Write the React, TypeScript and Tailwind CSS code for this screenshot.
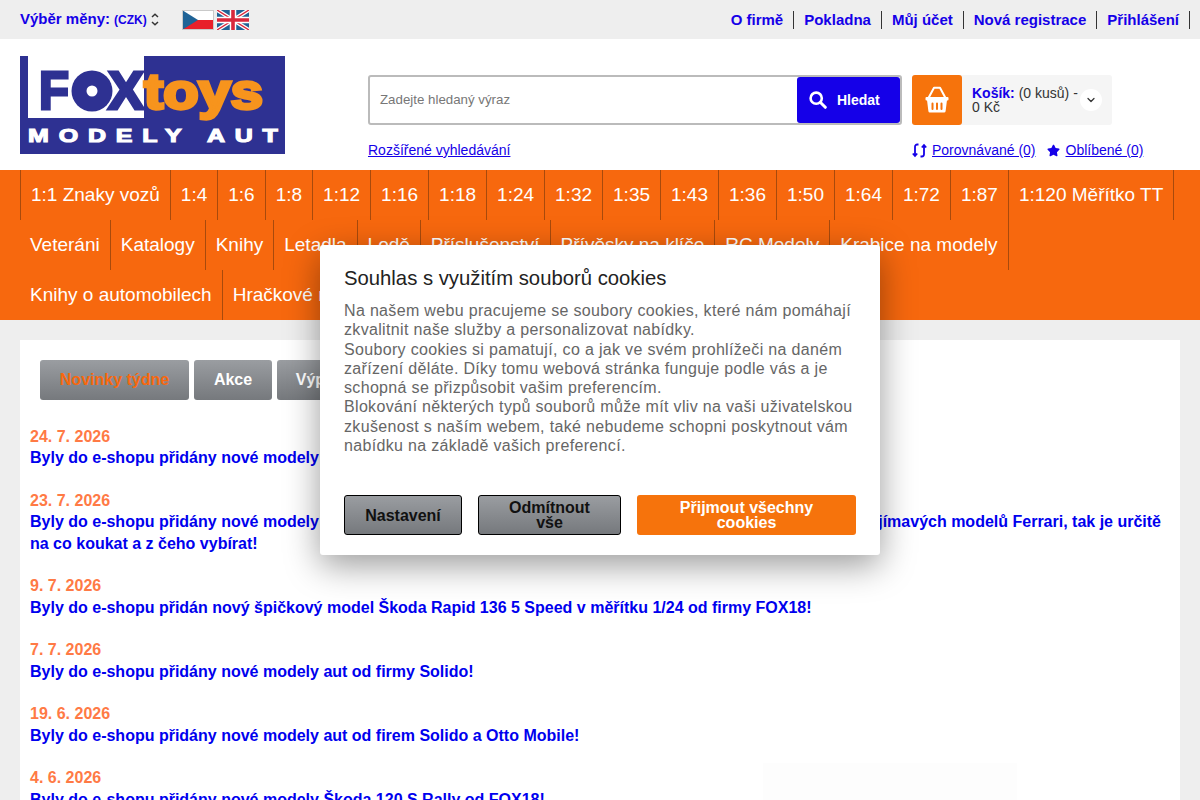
import { ChevronDown } from "lucide-react";
import { FaStar } from "react-icons/fa";

const row = [
  "1:1 Znaky vozů","1:4","1:6","1:8","1:12","1:16","1:18","1:24","1:32","1:35","1:43","1:36","1:50","1:64","1:72","1:87","1:120 Měřítko TT",
  "Veteráni","Katalogy","Knihy","Letadla","Lodě","Příslušenství","Přívěsky na klíče","RC Modely","Krabice na modely",
  "Knihy o automobilech","Hračkové modely",
];

const news: [string, string][] = [
  ["24. 7. 2026", "Byly do e-shopu přidány nové modely aut od firmy Norev a Otto Mobile!"],
  ["23. 7. 2026", "Byly do e-shopu přidány nové modely aut od firmy Looksmart a BBS! Spousta krásných, úchvatných a velmi zajímavých modelů Ferrari, tak je určitě na co koukat a z čeho vybírat!"],
  ["9. 7. 2026", "Byly do e-shopu přidán nový špičkový model Škoda Rapid 136 5 Speed v měřítku 1/24 od firmy FOX18!"],
  ["7. 7. 2026", "Byly do e-shopu přidány nové modely aut od firmy Solido!"],
  ["19. 6. 2026", "Byly do e-shopu přidány nové modely aut od firem Solido a Otto Mobile!"],
  ["4. 6. 2026", "Byly do e-shopu přidány nové modely Škoda 120 S Rally od FOX18!"],
];

function Logo() {
  const font = { fontFamily: "'Liberation Sans', Arial, sans-serif", fontWeight: 700 };
  return (
    <svg width="265" height="98" viewBox="0 0 265 98" className="block shrink-0">
      <rect width="265" height="98" fill="#2e3192" />
      <rect x="8" width="116" height="62" fill="#fff" />
      <text x="19" y="53" fontSize="54" textLength="30" lengthAdjust="spacingAndGlyphs" fill="#2e3192" stroke="#2e3192" strokeWidth="3" style={font}>F</text>
      <circle cx="72" cy="35" r="20.5" fill="#2e3192" />
      <circle cx="72" cy="35" r="5.5" fill="#fff" />
      <text x="88" y="53" fontSize="54" textLength="36" lengthAdjust="spacingAndGlyphs" fill="#2e3192" stroke="#2e3192" strokeWidth="3" style={font}>X</text>
      <text x="124" y="53" fontSize="50" textLength="119" lengthAdjust="spacingAndGlyphs" fill="#f7941d" stroke="#f7941d" strokeWidth="3.4" style={font}>toys</text>
      <g transform="scale(1.35 1)">
        <text x="6" y="86" fontSize="18.5" textLength="185" lengthAdjust="spacing" fill="#fff" stroke="#fff" strokeWidth="1.1" style={font}>MODELY AUT</text>
      </g>
    </svg>
  );
}

function CzFlag() {
  return (
    <svg width="32" height="20" viewBox="0 0 32 20" className="block">
      <rect width="32" height="10" fill="#fff" />
      <rect y="10" width="32" height="10" fill="#e8202a" />
      <path d="M0 0L16 10L0 20Z" fill="#1f6396" />
      <rect x="0.5" y="0.5" width="31" height="19" fill="none" stroke="#c9c9c9" />
    </svg>
  );
}

function UkFlag() {
  return (
    <svg width="32" height="20" viewBox="0 0 32 20" className="block">
      <rect width="32" height="20" fill="#1f6396" />
      <path d="M0 0L32 20M32 0L0 20" stroke="#fff" strokeWidth="4" />
      <path d="M0 0L32 20M32 0L0 20" stroke="#d8283c" strokeWidth="1.4" />
      <path d="M16 0V20M0 10H32" stroke="#fff" strokeWidth="6.5" />
      <path d="M16 0V20M0 10H32" stroke="#d8283c" strokeWidth="3.6" />
    </svg>
  );
}

function Basket() {
  return (
    <svg width="24" height="27" viewBox="0 0 24 27" fill="none" className="block -mt-[2px]">
      <path d="M3.5 12L9 1.8H15L20.5 12" stroke="#fff" strokeWidth="2" strokeLinejoin="round" />
      <rect x="0.5" y="11" width="23" height="3.4" rx="1" fill="#fff" />
      <path d="M2 14H22L20.6 25.2a1.5 1.5 0 0 1-1.5 1.3H4.9a1.5 1.5 0 0 1-1.5-1.3Z" fill="#fff" />
      <path d="M7.5 17.5V23M12 17.5V23M16.5 17.5V23" stroke="#f6730c" strokeWidth="2" strokeLinecap="round" />
    </svg>
  );
}

function SearchIcon() {
  return (
    <svg width="18" height="18" viewBox="0 0 18 18" fill="none" className="block shrink-0">
      <circle cx="7.2" cy="7.2" r="5.6" stroke="#fff" strokeWidth="2.6" />
      <path d="M11.5 11.5L16.3 16.3" stroke="#fff" strokeWidth="3" strokeLinecap="round" />
    </svg>
  );
}

function UpDown() {
  return (
    <svg width="8" height="13" viewBox="0 0 8 13" fill="none" className="block">
      <path d="M1 4L4 1.2L7 4M1 9L4 11.8L7 9" stroke="#333" strokeWidth="1.5" />
    </svg>
  );
}

function CompareIcon() {
  return (
    <svg width="15" height="15" viewBox="0 0 15 15" fill="none" className="mr-[5px] block shrink-0">
      <path d="M6.5 1.5H5.2A2.2 2.2 0 0 0 3 3.7V13M0.8 10.5L3 13L5.2 10.5" stroke="#1500e8" strokeWidth="1.8" />
      <path d="M8.5 13.5H9.8A2.2 2.2 0 0 0 12 11.3V2M9.8 4.5L12 2L14.2 4.5" stroke="#1500e8" strokeWidth="1.8" />
    </svg>
  );
}

export default function App() {
  return (
    <div className="relative h-[800px] overflow-hidden bg-[#eeeeee] font-['Liberation_Sans',Arial,sans-serif]">
      <div className="flex h-[39px] items-center justify-between pl-5 pr-[10px] text-[15px] font-bold text-[#1500e8]">
        <div className="flex items-center">
          <span className="mb-px">Výběr měny:</span>
          <span className="ml-1 text-[12px]">(CZK)</span>
          <span className="ml-[4px]"><UpDown /></span>
          <span className="ml-[23px]"><CzFlag /></span>
          <span className="ml-[3px]"><UkFlag /></span>
        </div>
        <div className="flex items-center">
          {["O firmě", "Pokladna", "Můj účet", "Nová registrace", "Přihlášení"].map((t) => (
            <span key={t} className="border-r border-[#333] px-[10px] leading-[18px]">{t}</span>
          ))}
        </div>
      </div>

      <div className="flex h-[131px] bg-white pl-5 pt-[17px]">
        <Logo />
        <div className="ml-[83px] mt-[19px]">
          <div className="flex gap-[10px]">
            <div className="flex h-[50px] w-[534px] items-center rounded-[3px] border-2 border-[#bbbbbb] bg-white">
              <span className="flex-1 pl-[10px] text-[13.3px] text-[#777]">Zadejte hledaný výraz</span>
              <div className="flex h-[46px] w-[103px] items-center gap-[10px] rounded-[3px] bg-[#1500e8] pl-3 text-[14px] font-bold text-white">
                <SearchIcon />
                <span>Hledat</span>
              </div>
            </div>
            <div className="flex h-[50px] w-[200px] items-center rounded-[3px] bg-[#f5f5f5]">
              <div className="flex h-[50px] w-[50px] items-center justify-center rounded-[3px] bg-[#f6730c]"><Basket /></div>
              <div className="ml-[10px] w-[108px] text-[14px] leading-[14px] text-[#333]">
                <b className="text-[#1500e8]">Košík:</b> (0 kusů) - 0 Kč
              </div>
              <div className="flex h-[22px] w-[22px] items-center justify-center rounded-full bg-white">
                <ChevronDown size={12} strokeWidth={2.5} className="text-[#333]" />
              </div>
            </div>
          </div>
          <div className="mt-[17px] flex items-center whitespace-nowrap text-[14px] leading-4 text-[#1500e8] underline">
            <span className="w-[544px]">Rozšířené vyhledávání</span>
            <CompareIcon />
            <span>Porovnávané (0)</span>
            <FaStar size={13} className="ml-[11px] mr-[6px]" />
            <span>Oblíbené (0)</span>
          </div>
        </div>
      </div>

      <div className="flex h-[150px] flex-wrap content-start bg-[#f7680e] px-5 text-[19px] text-white">
        {row.map((t, i) => (
          <span key={t} className={`flex h-[50px] items-center whitespace-nowrap border-r border-[#a84a0c] px-[10px] ${i === 0 ? "border-l" : ""}`}>{t}</span>
        ))}
      </div>

      <div className="relative mx-5 mt-5 h-[460px] overflow-hidden bg-white pl-[10px] pr-[10px] pt-5">
        <div className="ml-[10px] flex gap-[5px] text-[16px] font-bold text-white">
          <span className="flex h-10 w-[149px] items-center justify-center rounded-[3px] bg-gradient-to-b from-[#9a9da1] to-[#76797d] text-[#f7680e]">Novinky týdne</span>
          <span className="flex h-10 w-[78px] items-center justify-center rounded-[3px] bg-gradient-to-b from-[#9a9da1] to-[#76797d]">Akce</span>
          <span className="flex h-10 w-[106px] items-center justify-center rounded-[3px] bg-gradient-to-b from-[#9a9da1] to-[#76797d]">Výprodej</span>
        </div>
        <div className="mt-[25.5px] text-[16px] font-bold leading-[21.5px]">
          {news.map(([d, t]) => (
            <div key={d} className="mb-[21px]">
              <div className="text-[#ff7a45]">{d}</div>
              <div className="text-[#0000ee]">{t}</div>
            </div>
          ))}
        </div>
        <div className="absolute left-[743px] top-[423px] h-10 w-[254px] bg-[#fdfdfd]" />
      </div>

      <div className="absolute left-[320px] top-[245px] h-[310px] w-[560px] rounded-[3px] bg-white px-6 pt-5 shadow-[0_10px_35px_rgba(0,0,0,0.4)]">
        <div className="text-[20.3px] leading-[26px] text-[#222]">Souhlas s využitím souborů cookies</div>
        <p className="mt-[10px] text-[16px] leading-[19.25px] tracking-[0.33px] text-[#666]">
          Na našem webu pracujeme se soubory cookies, které nám pomáhají zkvalitnit naše služby a personalizovat nabídky.<br />
          Soubory cookies si pamatují, co a jak ve svém prohlížeči na daném zařízení děláte. Díky tomu webová stránka funguje podle vás a je schopná se přizpůsobit vašim preferencím.<br />
          Blokování některých typů souborů může mít vliv na vaši uživatelskou zkušenost s naším webem, také nebudeme schopni poskytnout vám nabídku na základě vašich preferencí.
        </p>
        <div className="mt-[40px] flex gap-4 text-center text-[16px] font-bold leading-[15px]">
          <span className="flex h-10 w-[118px] items-center justify-center rounded-[3px] border border-black bg-gradient-to-b from-[#9a9da1] to-[#76797d] text-[#111]">Nastavení</span>
          <span className="flex h-10 w-[143px] items-center justify-center rounded-[3px] border border-black bg-gradient-to-b from-[#9a9da1] to-[#76797d] px-6 text-[#111]">Odmítnout vše</span>
          <span className="flex h-10 w-[219px] items-center justify-center rounded-[3px] bg-[#f6730c] px-7 text-white">Přijmout všechny cookies</span>
        </div>
      </div>
    </div>
  );
}
